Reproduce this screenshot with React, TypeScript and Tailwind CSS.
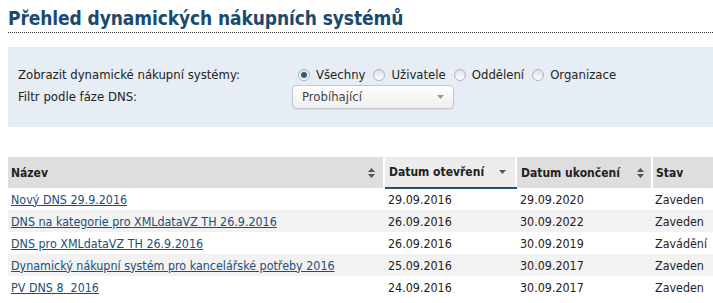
import React from 'react';

interface Row {
  name: string;
  opened: string;
  closed: string;
  state: string;
}

const rows: Row[] = [
  { name: 'Nový DNS 29.9.2016', opened: '29.09.2016', closed: '29.09.2020', state: 'Zaveden' },
  { name: 'DNS na kategorie pro XMLdataVZ TH 26.9.2016', opened: '26.09.2016', closed: '30.09.2022', state: 'Zaveden' },
  { name: 'DNS pro XMLdataVZ TH 26.9.2016', opened: '26.09.2016', closed: '30.09.2019', state: 'Zavádění' },
  { name: 'Dynamický nákupní systém pro kancelářské potřeby 2016', opened: '25.09.2016', closed: '30.09.2017', state: 'Zaveden' },
  { name: 'PV DNS 8  2016', opened: '24.09.2016', closed: '30.09.2017', state: 'Zaveden' },
];

const BothArrows = () => (
  <svg width="7" height="10" viewBox="0 0 7 10" className="fill-[#555]">
    <path d="M3.5 0 L7 4 L0 4 Z" />
    <path d="M0 6 L7 6 L3.5 10 Z" />
  </svg>
);

const DownArrow = ({ color = 'fill-[#555]' }: { color?: string }) => (
  <svg width="7" height="4" viewBox="0 0 7 4" className={color}>
    <path d="M0 0 L7 0 L3.5 4 Z" />
  </svg>
);

const Radio = ({ checked, label }: { checked?: boolean; label: string }) => (
  <label className="flex items-center gap-[6px]">
    <span className="w-[12px] h-[12px] rounded-full border border-[#a9b4be] bg-gradient-to-b from-[#dde2e6] to-[#ffffff] flex items-center justify-center">
      {checked && <span className="w-[6px] h-[6px] rounded-full bg-[#2a5d86]" />}
    </span>
    <span>{label}</span>
  </label>
);

export default function App() {
  return (
    <div className="w-[713px] h-[303px] bg-white pl-[8px] pt-[6px] text-[#222] font-['DejaVu_Sans_Condensed','DejaVu_Sans',sans-serif] overflow-hidden">
      <h1 className="text-[19px] font-bold text-[#1a4a6e] leading-[24px] tracking-[-0.1px]">
        Přehled dynamických nákupních systémů
      </h1>
      <div className="mt-[2px] border-b border-dotted border-[#333]" />
      <div className="mt-[14px] bg-[#e6edf5] h-[80px] pl-[10px] pt-[19px] text-[13px]">
        <div className="flex items-center h-[18px]">
          <div className="w-[280px]">Zobrazit dynamické nákupní systémy:</div>
          <div className="flex items-center gap-[8px]">
            <Radio checked label="Všechny" />
            <Radio label="Uživatele" />
            <Radio label="Oddělení" />
            <Radio label="Organizace" />
          </div>
        </div>
        <div className="flex items-center h-[24px] mt-[1px]">
          <div className="w-[274px]">Filtr podle fáze DNS:</div>
          <div className="w-[162px] h-[24px] rounded-[4px] border border-[#c2c8cd] bg-gradient-to-b from-white to-[#eeeeee] flex items-center justify-between pl-[9px] pr-[9px] shadow-[0_1px_1px_rgba(0,0,0,0.08)]">
            <span className="text-[#444]">Probíhající</span>
            <DownArrow color="fill-[#999]" />
          </div>
        </div>
      </div>
      <table className="mt-[30px] w-[705px] border-collapse table-fixed text-[12.4px]">
        <colgroup>
          <col className="w-[376px]" />
          <col className="w-[132px]" />
          <col className="w-[136px]" />
          <col className="w-[61px]" />
        </colgroup>
        <thead>
          <tr className="h-[31px] text-left font-bold text-[12px]">
            <th className="bg-[#dedede] pl-[3px] pr-[8px] border-r-2 border-white">
              <div className="flex items-center justify-between">
                <span>Název</span>
                <BothArrows />
              </div>
            </th>
            <th className="bg-[#ececec] pl-[4px] pr-[9px] border-r-2 border-white border-b-2 border-b-[#224f78]">
              <div className="flex items-center justify-between">
                <span>Datum otevření</span>
                <DownArrow />
              </div>
            </th>
            <th className="bg-[#dedede] pl-[4px] pr-[7px] border-r-2 border-white">
              <div className="flex items-center justify-between">
                <span>Datum ukončení</span>
                <BothArrows />
              </div>
            </th>
            <th className="bg-[#dedede] pl-[3px]">Stav</th>
          </tr>
        </thead>
        <tbody>
          {rows.map((row, index) => (
            <tr key={index} className={`h-[22px] ${index % 2 === 1 ? 'bg-[#f2f2f2]' : 'bg-white'}`}>
              <td className="pl-[3px] pt-[2px]">
                <a href="#" className="text-[#1b4f7a] underline whitespace-pre">{row.name}</a>
              </td>
              <td className="pl-[4px] pt-[2px]">{row.opened}</td>
              <td className="pl-[4px] pt-[2px]">{row.closed}</td>
              <td className="pl-[3px] pt-[2px]">{row.state}</td>
            </tr>
          ))}
        </tbody>
      </table>
    </div>
  );
}
